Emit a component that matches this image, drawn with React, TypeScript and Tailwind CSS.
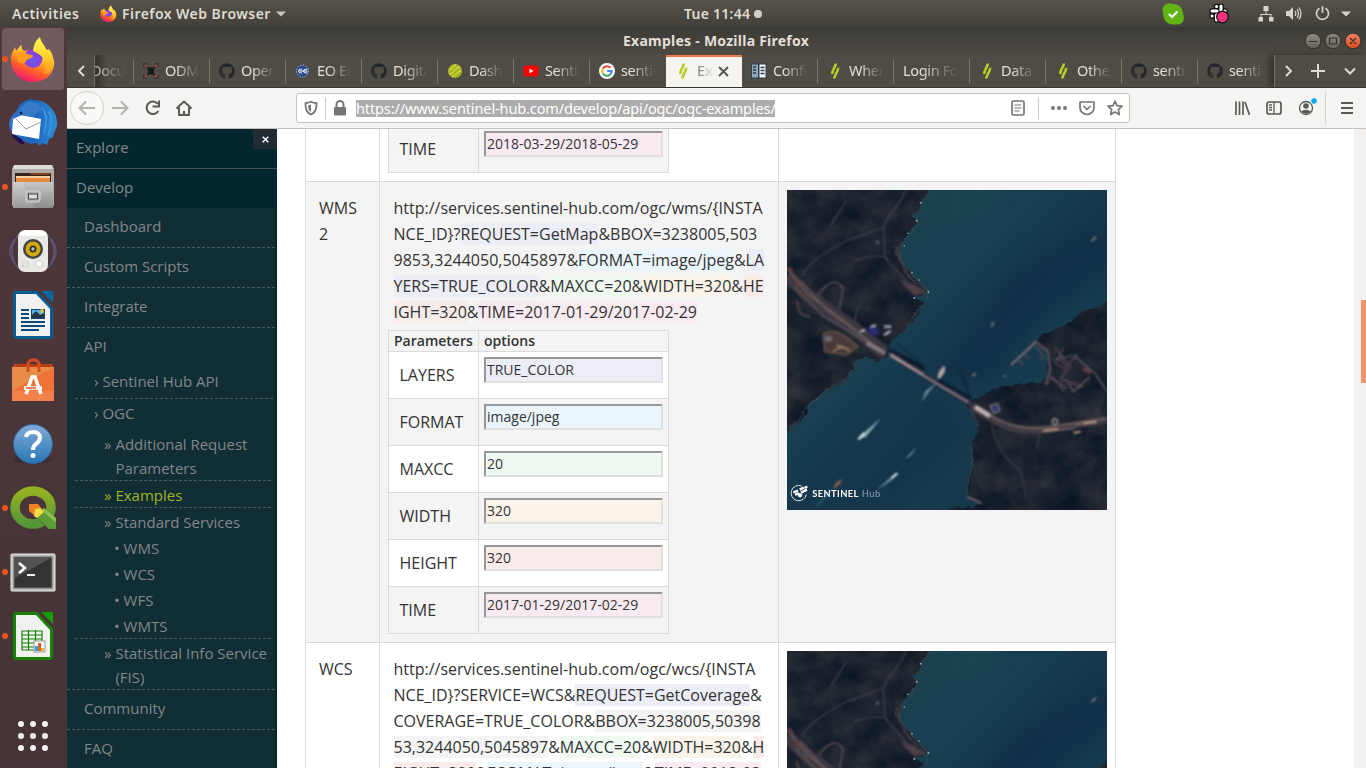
import React from "react";
import { FaGithub } from "react-icons/fa";

const UI = "font-['Noto_Sans','Open_Sans',sans-serif]";
const PAGE = "font-['Open_Sans','Noto_Sans',sans-serif]";

/* ---------- Icons ---------- */

function FirefoxLogo({ size, id }: { size: number; id: string }) {
  return (
    <svg width={size} height={size} viewBox="0 0 46 46">
      <defs>
        <linearGradient id={id + "a"} x1="0.75" y1="0.1" x2="0.3" y2="1">
          <stop offset="0" stopColor="#fff04a" />
          <stop offset="0.35" stopColor="#ffb020" />
          <stop offset="0.65" stopColor="#ff5a2c" />
          <stop offset="1" stopColor="#f0107a" />
        </linearGradient>
        <radialGradient id={id + "b"} cx="0.5" cy="0.6" r="0.6">
          <stop offset="0" stopColor="#6a5cf0" />
          <stop offset="1" stopColor="#9a35d8" />
        </radialGradient>
        <linearGradient id={id + "c"} x1="0.5" y1="0" x2="0.6" y2="1">
          <stop offset="0" stopColor="#fff650" />
          <stop offset="0.5" stopColor="#ffd52e" />
          <stop offset="1" stopColor="#ff9a20" />
        </linearGradient>
      </defs>
      <path d="M1 25C0 18 4 14 5 11l1 4c2-2 3-5 6-6-1 3 0 4 2 6 5 0 8-2 13-1 5-2 9 0 12 4 4 3 6 7 5 12C42 40 34 46 23 46S2 38 1 25z" fill={`url(#${id}a)`} />
      <circle cx="23" cy="22.500" r="9.500" fill={`url(#${id}b)`} />
      <path d="M23 15c1-7 3-11 7-14 1 6 5 8 6 12l2 1 1-1c4 5 6 12 4 18-2 5-6 7-10 7 3-3 4-8 2-12-2-6-6-8-12-11z" fill={`url(#${id}c)`} />
      <path d="M8 17c3-2 6-2 9 1 2 1 5 0 6 2-1 3-5 2-7 5-1 2-3 3-6 2-3-2-4-6-2-10z" fill="#ff9d1e" />
    </svg>
  );
}

const GithubMark = () => <FaGithub size={16} color="#24292e" />;

const SlashMark = () => (
  <svg width="16" height="16" viewBox="0 0 16 16" fill="none" stroke="#b5cc22" strokeWidth="2.600">
    <path d="M8.800.5C8.800 4 5.300 6 5.200 11M11.200 4.800C11.100 9.500 7.500 11 7.300 15.500" />
  </svg>
);

const OdmMark = () => (
  <svg width="16" height="16" viewBox="0 0 16 16" fill="none" stroke="#1d1b19" strokeWidth="1.100">
    <path d="M3 3l10 10M13 3L3 13" />
    <rect x="5.500" y="5" width="5" height="6" fill="#1d1b19" />
    <path d="M.7 4V.7H4M12 .7h3.300V4M.7 12v3.300H4M12 15.300h3.300V12" strokeDasharray="1.500 1" />
    <circle cx="3" cy="3" r="1.100" fill="#d9442c" stroke="none" /><circle cx="13" cy="3" r="1.100" fill="#d9442c" stroke="none" />
    <circle cx="3" cy="13" r="1.100" fill="#d9442c" stroke="none" /><circle cx="13" cy="13" r="1.100" fill="#d9442c" stroke="none" />
  </svg>
);

const EoMark = () => (
  <svg width="16" height="16" viewBox="0 0 16 16">
    <circle cx="7.500" cy="8" r="6.300" fill="#274a86" />
    <circle cx="7.500" cy="8" r="6" fill="none" stroke="#cfd8ea" strokeWidth="1" strokeDasharray="1.200 1.600" />
    <path d="M7 6.200H5.500a1.800 1.800 0 000 3.700H7M12.500 6.200H10.500a1.800 1.800 0 000 3.700h2M4.500 8h8" stroke="#fff" strokeWidth="1" fill="none" />
  </svg>
);

const DashMark = () => (
  <svg width="16" height="16" viewBox="0 0 16 16">
    <circle cx="8" cy="8" r="7" fill="#a9b81c" />
    <path d="M2 7c3 0 3-4 7-5M2 11c5 0 5-6 11-7M5 14c4-1 4-5 9-6" stroke="#dfe57a" strokeWidth="1" fill="none" />
  </svg>
);

const YoutubeMark = () => (
  <svg width="16" height="16" viewBox="0 0 16 16">
    <rect x=".5" y="2.500" width="15" height="11" rx="2.800" fill="#f00" />
    <path d="M6.500 5.700v4.600l4-2.300z" fill="#fff" />
  </svg>
);

const GoogleMark = () => (
  <svg width="16" height="16" viewBox="0 0 16 16">
    <circle cx="8" cy="8" r="8" fill="#fff" />
    <g fill="none" strokeWidth="2">
      <path d="M11.400 4.800A4.700 4.700 0 004 5.500" stroke="#ea4335" />
      <path d="M4 5.500a4.700 4.700 0 000 5" stroke="#fbbc05" />
      <path d="M4 10.500a4.700 4.700 0 007.200 1" stroke="#34a853" />
      <path d="M11.200 11.500A4.700 4.700 0 0012.700 8H8.200" stroke="#4285f4" />
    </g>
  </svg>
);

const DocsMark = () => (
  <svg width="16" height="16" viewBox="0 0 16 16">
    <rect x=".5" y="1" width="7" height="14" fill="#8fa5b8" stroke="#2c3e50" />
    <rect x="8" y="1" width="7" height="14" fill="#f4f4f4" stroke="#2c3e50" />
    <path d="M2 4h3M2 7h3M2 10h3M9.500 4.500h4M9.500 7.500h4M9.500 10.500h4" stroke="#2c3e50" strokeWidth="1.500" />
  </svg>
);

/* ---------- Top bars ---------- */

function SystemBar() {
  return (
    <header className={`flex h-[27px] shrink-0 items-center bg-linear-to-b from-[#57534a] to-[#42403a] text-[#dfdbd2] ${UI}`}>
      <div className="flex w-[660px] items-center pl-3 text-[14px] font-semibold">
        <span className="w-[88px] tracking-[0.5px]">Activities</span>
        <FirefoxLogo size={17} id="fxs" />
        <span className="ml-[5px] w-[150px] whitespace-nowrap tracking-[0.45px]">Firefox Web Browser</span>
        <svg className="ml-1" width="10" height="6" viewBox="0 0 10 6"><path d="M0 .5h10L5 5.500z" fill="#c9c5bd" /></svg>
      </div>
      <div className="flex items-center gap-1 pl-[24px] text-[14px] font-semibold">
        <span className="w-[66px] whitespace-nowrap tracking-[0.25px]">Tue 11:44</span>
        <span className="size-2 rounded-full bg-[#d3cfc8]" />
      </div>
      <div className="ml-auto flex items-center pr-[15px]">
        <svg className="mr-[24px]" width="22" height="22" viewBox="0 0 22 22">
          <path d="M6 .5c3-1 4 .4 7 .5 5 1 8 5 8 9 1 3 1 5 .5 7-1 4-5 5-8 4.500-4 .5-9-1-11-5C1 14 1.500 12 1 9-.5 5 2 1.500 6 .5z" fill="#5fb312" />
          <path d="M7 11l3 3 5.500-5.500" stroke="#fff" strokeWidth="2.200" fill="none" />
        </svg>
        <svg className="mr-[28px]" width="22" height="21" viewBox="0 0 22 21">
          <g stroke="#111" strokeWidth="5.500" strokeLinecap="round"><path d="M8.500 3.500h.1M4 8h5M13 3v5M17 8h.1M4 13h.1M8.500 12v5M13 12h4" /></g>
          <g stroke="#fff" strokeWidth="3" strokeLinecap="round"><path d="M8.500 3.500h.1M4 8h5M13 3v5M17 8h.1M4 13h.1M8.500 12v5M13 12h4" /></g>
          <circle cx="14.500" cy="14" r="5.800" fill="#f2327d" stroke="#111" strokeWidth="1.200" />
        </svg>
        <svg className="mr-[12px]" width="16" height="16" viewBox="0 0 16 16" fill="#d8d4cc">
          <path d="M5.500 0h5v5h-5zM.5 11h4.500v4.500H.5zM11 11h4.500v4.500H11zM7.500 5h1v3h5v3h-1V9h-9v2h-1V8h5z" />
        </svg>
        <svg className="mr-[13px]" width="16" height="15" viewBox="0 0 16 15">
          <path d="M0 5h3l4-4v13L3 10H0z" fill="#d8d4cc" />
          <path d="M9 5q1.600 2.500 0 5M11 3.200q3 4.300 0 8.600M13 1.500q4 6 0 12" stroke="#d8d4cc" strokeWidth="1.300" fill="none" />
        </svg>
        <svg className="mr-[11px]" width="15" height="15" viewBox="0 0 15 15" fill="none" stroke="#d8d4cc" strokeWidth="1.700">
          <path d="M4.500 2.200a6 6 0 106 0M7.500.3v6.500" />
        </svg>
        <svg width="10" height="6" viewBox="0 0 10 6"><path d="M0 .5h10L5 5.500z" fill="#d8d4cc" /></svg>
      </div>
    </header>
  );
}

const fade = "[mask-image:linear-gradient(to_right,#000_30%,transparent_98%)]";

function Tab({ icon, label, last }: { icon?: React.ReactNode; label: string; last?: boolean }) {
  return (
    <div className="flex h-8 w-[76px] shrink-0 items-center">
      <div className="flex w-[75px] items-center overflow-hidden pl-[9px]">
        {icon && <span className="mr-[6px] shrink-0">{icon}</span>}
        <span className={`flex-1 overflow-hidden whitespace-nowrap text-[14.500px] tracking-[-0.35px] text-[#e2dfd7] ${icon ? "max-w-[35px]" : "max-w-[56px]"} ${fade}`}>{label}</span>
      </div>
      {!last && <span className="h-6 w-px bg-[#7a766f]" />}
    </div>
  );
}

function WindowTitle() {
  return (
    <div className={`flex h-[28px] shrink-0 items-center bg-linear-to-b from-[#3b3a35] to-[#4e4b44] text-[#e3dfd7] ${UI}`}>
      <span className="mb-[2px] ml-[556px] w-[200px] whitespace-nowrap text-[14px] font-bold tracking-[0.25px]">Examples - Mozilla Firefox</span>
      <svg className="ml-auto mr-1" width="58" height="18" viewBox="0 0 58 18">
        <defs>
          <linearGradient id="wg" x2="0" y2="1"><stop offset="0" stopColor="#8d8a82" /><stop offset="1" stopColor="#65625b" /></linearGradient>
          <linearGradient id="wr" x2="0" y2="1"><stop offset="0" stopColor="#f58463" /><stop offset="1" stopColor="#dc4a1b" /></linearGradient>
        </defs>
        <circle cx="9" cy="9" r="7.800" fill="url(#wg)" stroke="#34322e" /><circle cx="29" cy="9" r="7.800" fill="url(#wg)" stroke="#34322e" /><circle cx="49" cy="9" r="7.800" fill="url(#wr)" stroke="#34322e" />
        <path d="M5 9.500h8M25.500 6h7v6h-7zM46 6l6 6M52 6l-6 6" stroke="#33312d" strokeWidth="1.200" fill="none" />
      </svg>
    </div>
  );
}

function TabStrip() {
  return (
    <div className={`flex h-[32px] shrink-0 bg-[#4f4c45] ${UI}`}>
      <div className="flex w-[28px] shrink-0 items-center justify-center border-r border-[#74716a]">
        <svg width="8" height="12" viewBox="0 0 8 12" fill="none" stroke="#dedad2" strokeWidth="2"><path d="M7 1L2 6l5 5" /></svg>
      </div>
      <div className="flex w-[39px] shrink-0 items-center justify-end overflow-hidden bg-linear-to-r from-[#34322e] to-[#4f4c45] to-30%">
        <span className="w-[38px] overflow-hidden whitespace-nowrap text-[14.500px] tracking-[-0.3px] text-[#b5b2ab] [mask-image:linear-gradient(to_right,#000_20%,transparent_80%)]"><span className="-ml-1">Docu</span></span>
        <span className="h-6 w-px shrink-0 bg-[#7a766f]" />
      </div>
      <Tab icon={<OdmMark />} label="ODM-" />
      <Tab icon={<GithubMark />} label="Open" />
      <Tab icon={<EoMark />} label="EO Edu" />
      <Tab icon={<GithubMark />} label="Digita" />
      <Tab icon={<DashMark />} label="Dashb" />
      <Tab icon={<YoutubeMark />} label="Sentin" />
      <Tab icon={<GoogleMark />} label="sentin" last />
      <div className="flex w-[76px] shrink-0 items-center border-t-2 border-[#f07746] bg-[#f5f4f2] pb-[2px] pl-[9px]">
        <SlashMark />
        <span className="ml-[6px] w-[18px] overflow-hidden whitespace-nowrap text-[14.500px] text-[#77756f] [mask-image:linear-gradient(to_right,#000,transparent_95%)]">Exa</span>
        <svg className="ml-[3px]" width="11" height="11" viewBox="0 0 11 11"><path d="M1 1l9 9M10 1l-9 9" stroke="#55534f" strokeWidth="1.800" /></svg>
      </div>
      <Tab icon={<DocsMark />} label="Config" />
      <Tab icon={<SlashMark />} label="Where" />
      <Tab label="Login For" />
      <Tab icon={<SlashMark />} label="Data f" />
      <Tab icon={<SlashMark />} label="Other" />
      <Tab icon={<GithubMark />} label="sentin" />
      <Tab icon={<GithubMark />} label="sentin" last />
      <div className="flex min-w-0 flex-1 items-center border-l border-[#74716a] bg-[#4f4c45] pl-[9px] shadow-[-4px_0_7px_#2f2e2a]">
        <svg className="shrink-0" width="76" height="16" viewBox="0 0 76 16" fill="none" stroke="#dedad2" strokeWidth="2">
          <path d="M2 3l5 5-5 5M27 8h14M34 1v14M61 5.500l5 5 5-5" />
        </svg>
      </div>
    </div>
  );
}

function Toolbar() {
  return (
    <div className={`flex h-[41px] shrink-0 items-center border-b border-[#c5c2bd] bg-[#f5f4f2] ${UI}`}>
      <svg width="229" height="40" viewBox="67 88 229 40" fill="none" stroke="#5a5956" strokeWidth="2">
        <circle cx="87" cy="108" r="16.500" fill="#f8f8f7" stroke="#d3d0cc" strokeWidth="1" />
        <path d="M95 108H80M86 101.500l-6.500 6.500 6.500 6.500" stroke="#b4b2af" />
        <path d="M112 108h15M121 101.500l6.500 6.500-6.500 6.500" stroke="#b4b2af" />
        <path d="M158 104a6.300 6.300 0 10.300 7M159 100.500v6h-6.500" />
        <path d="M176.500 108.500l7.500-7 7.500 7M179 107.500v7.500h10v-7.500M184 115v-4" strokeLinejoin="round" />
      </svg>
      <div className="flex h-[30px] w-[834px] shrink-0 items-center rounded-[3px] border border-[#c6c3be] bg-white">
        <svg className="shrink-0" width="59" height="28" viewBox="297 94 59 28" fill="none" stroke="#777674">
          <path d="M305.500 103q3 0 5.500-1.300 2.500 1.300 5.500 1.300c.3 5.500-1 9.500-5.500 11.500-4.500-2-5.800-6-5.500-11.500z" strokeWidth="1.800" />
          <path d="M311 104.500v7.500c-2.500-1.500-2.800-4-2.900-6.800 1 0 2-.2 2.900-.7z" fill="#777674" stroke="none" />
          <path d="M325.500 97.500v22" stroke="#d0ceca" />
          <rect x="334" y="107" width="12" height="8.500" rx="1" fill="#777674" stroke="none" />
          <path d="M336.500 107v-2.500a3.500 3.500 0 017 0v2.500" strokeWidth="2" />
        </svg>
        <span className="h-[17px] w-[419px] shrink-0 whitespace-nowrap bg-[#adadad] text-[14.500px] leading-[17px] tracking-[-0.12px] text-white">https://www.sentinel-hub.com/develop/api/ogc/ogc-examples/</span>
        <svg className="ml-auto" width="122" height="28" viewBox="1007 94 122 28" fill="none" stroke="#777674" strokeWidth="1.700">
          <rect x="1012" y="101" width="12" height="14" rx="1.500" />
          <path d="M1014.500 105h7M1014.500 108h7M1014.500 111h5" strokeWidth="1.200" />
          <path d="M1038.500 97.500v22" stroke="#d0ceca" strokeWidth="1" />
          <g fill="#777674" stroke="none"><circle cx="1053" cy="108" r="2" /><circle cx="1059" cy="108" r="2" /><circle cx="1065" cy="108" r="2" /></g>
          <path d="M1080 102h14v5.500a7 7 0 01-14 0zM1083.500 106l3.500 3.500 3.500-3.500" strokeLinejoin="round" />
          <path d="M1115 101.200l2 4.500 5 .5-3.700 3.400 1.100 5-4.400-2.600-4.400 2.600 1.100-5-3.700-3.400 5-.5z" strokeLinejoin="round" />
        </svg>
      </div>
      <svg className="ml-auto" width="136" height="40" viewBox="1230 88 136 40" fill="none" stroke="#5a5956" strokeWidth="2">
        <path d="M1236 101.500v13.500M1239.500 101.500v13.500M1243 101.500v13.500M1245 102l4.500 13" strokeWidth="1.700" />
        <rect x="1267" y="102" width="14" height="12" rx="2" strokeWidth="1.700" />
        <path d="M1274 102v12M1269 105h3M1269 107.500h3M1269 110h3" strokeWidth="1.300" />
        <circle cx="1306" cy="108" r="6.500" strokeWidth="1.300" />
        <circle cx="1306" cy="106" r="2.800" fill="#5a5956" stroke="none" /><path d="M1301 111.500q5-3.500 10 0-4.500 4.500-10 0z" fill="#5a5956" stroke="none" />
        <circle cx="1314" cy="101" r="3.300" fill="#00a8f5" stroke="#f5f4f2" strokeWidth="1" />
        <path d="M1325.500 91v34" stroke="#d5d3cf" strokeWidth="1" />
        <path d="M1341 103h12M1341 108h12M1341 113h12" />
      </svg>
    </div>
  );
}

/* ---------- Dock ---------- */

function DockItem({ children, active, running }: { children: React.ReactNode; active?: boolean; running?: boolean }) {
  return (
    <div className="flex h-[64.100px] shrink-0 items-center">
      <div className={`flex h-[62px] w-[62px] items-center rounded ${active ? "bg-[#715a5e]" : ""} ml-[2px]`}>
        <span className={`size-[6px] shrink-0 rounded-full ${running ? "bg-[#e95420]" : ""}`} />
        <div className="flex w-[50px] shrink-0 justify-center">{children}</div>
      </div>
    </div>
  );
}

function Dock() {
  return (
    <aside className="flex w-[67px] shrink-0 flex-col overflow-hidden bg-linear-to-b from-[#50373b] to-[#453437]">
      <DockItem active running><FirefoxLogo size={46} id="fxd" /></DockItem>
      <DockItem>
        <svg width="50" height="50" viewBox="0 0 50 50">
          <defs><linearGradient id="tb" x2="1"><stop offset="0" stopColor="#2f78cc" /><stop offset=".5" stopColor="#1d62bd" /><stop offset="1" stopColor="#2c8fd8" /></linearGradient></defs>
          <path d="M8 14Q12 5 17 3q5-3 10-1 9 0 15 7 8 7 7 19l-3 7-1 4-4 2-2 6-4-2-4 3-2-3-6 1Q1 38 1 26q1-8 7-12z" fill="url(#tb)" />
          <path d="M3 35l11 6 3 6Q6 44 3 35z" fill="#211155" />
          <path d="M5 21l9-4 19 4-2 20L4 36z" fill="#fff" /><path d="M8 21l10 10 15-7" stroke="#999" fill="none" />
          <path d="M10 16q4-10 11-13 11 1 13 8L24 19l-13-2z" fill="#367bc5" /><path d="M34 10q7 7 2 25M41 13q5 9-1 24" stroke="#4a9ddf" strokeWidth="2" fill="none" opacity=".7" /><circle cx="13" cy="15" r="1.500" fill="#101c38" />
        </svg>
      </DockItem>
      <DockItem running>
        <svg width="44" height="46" viewBox="0 0 44 46">
          <defs><linearGradient id="dr" x2="0" y2="1"><stop offset="0" stopColor="#c7c7c7" /><stop offset="1" stopColor="#8d8d8d" /></linearGradient></defs>
          <path d="M3 1h38l2 4v36l-2 3H3l-2-3V5z" fill="#adaba8" /><path d="M3 1h38l1 4H2z" fill="#dedcd9" />
          <path d="M4 9h36v10H4z" fill="#35231c" /><path d="M5 12h34v7H5z" fill="#e7893e" /><path d="M5 13h34" stroke="#f7d09f" strokeWidth="2" /><path d="M19 10h20" stroke="#d15b1e" />
          <path d="M2 18h40v26H2z" fill="url(#dr)" /><path d="M2 18h9l13 26H2z" fill="#fff" opacity=".12" />
          <rect x="15" y="27" width="14" height="11" rx="2" fill="#b0b0b0" stroke="#d6d6d6" /><rect x="17.500" y="30" width="9" height="5" fill="#ddd" stroke="#444" />
        </svg>
      </DockItem>
      <DockItem>
        <svg width="50" height="46" viewBox="0 0 50 46">
          <path d="M7 11q-10 13 0 25M43 11q10 13 0 25M10 7Q-2 24 10 40M40 7q12 17 0 33" stroke="#5e6892" strokeWidth="1.300" fill="none" opacity=".75" />
          <rect x="10" y="2" width="30" height="42" rx="7" fill="#e8e8e5" /><path d="M16 2.500h18q4 1 5 5H11q1-4 5-5z" fill="#fff" />
          <circle cx="25" cy="21" r="10" fill="#444" /><circle cx="25" cy="21" r="7.500" fill="#d2aa0a" /><circle cx="25" cy="21" r="3.500" fill="#333" /><circle cx="25" cy="21" r="1.700" fill="#bbb" />
          <circle cx="31" cy="36" r="3.500" fill="#fafafa" stroke="#ccc" /><rect x="15" y="34" width="5" height="5" fill="none" stroke="#d2d2cf" />
        </svg>
      </DockItem>
      <DockItem>
        <svg width="40" height="48" viewBox="0 0 40 48">
          <path d="M2 0h22l16 17v29l-2 2H2l-2-2V2z" fill="#075d93" /><path d="M28 0h12v12z" fill="#0668a1" />
          <path d="M3 3h20l14 15v27H3z" fill="#f1f1ef" /><path d="M23 3l14 15v-1L23 3z" fill="#999" />
          <path d="M8 19h8M8 23h8M8 27h8M8 31h24M8 35h24M8 39h18" stroke="#064b79" strokeWidth="2" /><rect x="18.500" y="18.500" width="13" height="9" fill="#58aee3" stroke="#064b79" /><path d="M19 27v-3l4-4 4 4 4-2v5z" fill="#283642" /><circle cx="29" cy="20" r="2" fill="#e2bd34" />
        </svg>
      </DockItem>
      <DockItem>
        <svg width="42" height="44" viewBox="0 0 42 44">
          <path d="M2 6h38v6H2z" fill="#b43d11" /><path d="M0 10l4-4M42 10l-4-4" stroke="#da592a" />
          <path d="M0 9h42v34H0z" fill="#ef7336" /><path d="M0 9h42L0 33z" fill="#e39a54" opacity=".65" /><path d="M0 33h42v10H0z" fill="#f28249" />
          <path d="M16 14V5l3-3h5l3 3v9" stroke="#d9491d" strokeWidth="3" fill="none" />
          <path d="M14 36l6-17h3l6 17M12 30h18" stroke="#fff" strokeWidth="3.500" fill="none" /><path d="M14 30h10" stroke="#e45b28" strokeWidth="1.500" />
        </svg>
      </DockItem>
      <DockItem>
        <svg width="42" height="44" viewBox="0 0 42 44">
          <defs><linearGradient id="hp" x2="0" y2="1"><stop offset="0" stopColor="#84aad8" /><stop offset="1" stopColor="#2777b5" /></linearGradient></defs>
          <ellipse cx="21" cy="37" rx="20" ry="5" fill="#30292d" opacity=".5" /><circle cx="21" cy="22" r="19.500" fill="url(#hp)" stroke="#2b669d" />
          <path d="M14 15q1-5 7-5t7 5q0 4-4 7-3 2-3 6" stroke="#fff" strokeWidth="4" fill="none" /><circle cx="21" cy="33.500" r="2.500" fill="#fff" />
        </svg>
      </DockItem>
      <DockItem running>
        <svg width="46" height="46" viewBox="0 0 46 46">
          <defs><linearGradient id="qg" x2="0" y2="1"><stop offset="0" stopColor="#93b222" /><stop offset="1" stopColor="#559638" /></linearGradient></defs>
          <ellipse cx="23" cy="22.500" rx="18" ry="16.500" fill="none" stroke="url(#qg)" strokeWidth="9.500" />
          <path d="M23 29l15 15h8v-9L29 25z" fill="#4a3538" /><path d="M25 31l14 13h7v-6L31 25z" fill="#589d36" /><path d="M31 25l15 13v-5L34 23z" fill="#8bc24b" />
          <path d="M19 19h9l4 5-7 7-6-5z" fill="#f38024" /><path d="M25 24l5-1 4 4-7 6-3-2z" fill="#f5dc45" />
        </svg>
      </DockItem>
      <DockItem running>
        <svg className="translate-y-px" width="46" height="40" viewBox="0 0 46 40">
          <rect x="1" y="1" width="44" height="37" rx="1" fill="#b9b9b6" stroke="#ededeb" /><rect x="4" y="4" width="38" height="31" fill="#333" stroke="#777" />
          <path d="M5 5h36L5 25z" fill="#686868" opacity=".6" /><path d="M9 10l6 5-6 5" stroke="#fff" strokeWidth="2.500" fill="none" /><path d="M17 22h8" stroke="#eee" strokeWidth="2" />
        </svg>
      </DockItem>
      <DockItem running>
        <svg width="40" height="48" viewBox="0 0 40 48">
          <path d="M2 0h22l16 17v29l-2 2H2l-2-2V2z" fill="#168207" /><path d="M28 0h12v12z" fill="#189b0a" />
          <path d="M3 3h20l14 15v27H3z" fill="#f1f1ef" />
          <path d="M9 19h20v19H9zM9 23h20M9 27h20M9 31h20M9 35h20M15.500 18v20M22.500 18v20" stroke="#187e0a" strokeWidth="1.200" fill="none" />
          <rect x="21" y="29" width="11" height="11" fill="#f7f7f7" stroke="#999" /><path d="M22 34h3v5h-3z" fill="#35a0df" /><path d="M25 31h3v8h-3z" fill="#d8661c" /><path d="M28 36h3v3h-3z" fill="#e6b420" />
        </svg>
      </DockItem>
      <svg className="ml-[17px] mt-auto mb-[16px] shrink-0" width="32" height="32" viewBox="0 0 32 32" fill="#f2efef">
        {[4, 16, 28].map((y) => [4, 16, 28].map((x) => <circle key={`${x}-${y}`} cx={x} cy={y} r="3" />))}
      </svg>
    </aside>
  );
}

/* ---------- Site navigation ---------- */

function SideNav() {
  const dash = "border-b border-dashed border-[#4f5c5c]";
  return (
    <nav className={`w-[210px] shrink-0 overflow-hidden bg-[#03272e] text-[15px] text-[#82878a] ${PAGE}`}>
      <div className="flex h-[40px] items-start justify-between border-b border-[#4b5055]">
        <span className="pl-[9px] leading-[37px]">Explore</span>
        <span className="flex h-5 w-6 items-center justify-center bg-[#232c34]">
          <svg width="7" height="7" viewBox="0 0 7 7"><path d="M.7.7l5.600 5.600M6.300.7L.7 6.300" stroke="#fff" strokeWidth="1.500" /></svg>
        </span>
      </div>
      <div className="h-[39px] pl-[9px] leading-[37px]">Develop</div>
      <div className="mr-[2px] bg-[#112e35]">
        {["Dashboard", "Custom Scripts", "Integrate"].map((t) => (
          <div key={t} className={`h-[40px] pl-[17px] leading-[36px] ${dash}`}>{t}</div>
        ))}
        <div className="h-[37px] pl-[17px] leading-[36px]">API</div>
        <div className={`ml-2 mr-[2px] h-[34px] pl-[19px] leading-[32px] ${dash}`}>› Sentinel Hub API</div>
        <div className="h-[32px] pl-[27px] leading-[28px]">› OGC</div>
        <div className={`ml-2 mr-1 flex h-[50px] gap-1 pl-[29px] leading-[24px] ${dash}`}><span className="pt-px">»</span><span className="pt-px">Additional Request<br />Parameters</span></div>
        <div className={`ml-2 mr-1 flex h-[27px] gap-1 pl-[29px] leading-[28px] text-[#a3b320] ${dash}`}><span>»</span><span>Examples</span></div>
        <div className="flex h-[28px] gap-1 pl-[37px] leading-[28px]"><span>»</span><span>Standard Services</span></div>
        {["WMS", "WCS", "WFS"].map((t) => <div key={t} className="h-[26px] pl-[47px] leading-[24px]">• {t}</div>)}
        <div className={`ml-2 mr-1 h-[25px] pl-[39px] leading-[24px] ${dash}`}>• WMTS</div>
        <div className={`flex h-[51px] gap-1 pl-[37px] pt-[2px] leading-[24px] ${dash}`}><span>»</span><span className="whitespace-nowrap">Statistical Info Service<br />(FIS)</span></div>
        <div className={`h-[40px] pl-[17px] leading-[37px] ${dash}`}>Community</div>
        <div className="h-[40px] pl-[17px] leading-[37px]">FAQ</div>
      </div>
    </nav>
  );
}

/* ---------- Satellite view ---------- */

const WEST = "M16 10H470L440 65 438 90 412 98 428 130 400 155 378 195 372 235 400 265 430 300 460 335 418 355 445 370 425 415 385 455 345 485 335 530 310 545 270 528 235 550 225 590 195 615 150 635 110 665 90 705 55 740 16 795z";
const EAST = "M1020 355L915 398 880 430 845 450 800 465 780 485 815 520 820 550 812 600 725 612 650 628 600 655 575 680 610 735 600 770 595 800 592 870 575 955 620 975 530 985 500 1010H1020z";

function SatelliteView({ id }: { id: string }) {
  return (
    <svg width="320" height="320" viewBox="36 30 960 960" className="block">
      <defs>
        <linearGradient id={id + "w"} x1="0" y1="0" x2="1" y2="1">
          <stop offset="0" stopColor="#1b444f" /><stop offset=".38" stopColor="#183f50" /><stop offset=".52" stopColor="#16364b" /><stop offset=".62" stopColor="#173c4f" /><stop offset="1" stopColor="#163247" />
        </linearGradient>
        <filter id={id + "n"} x="0" y="0" width="100%" height="100%" colorInterpolationFilters="sRGB">
          <feTurbulence type="fractalNoise" baseFrequency=".012 .015" numOctaves="5" seed="8" result="n" />
          <feColorMatrix in="n" values="0 0 0 .19 .015  0 0 0 .15 .062  0 0 0 .09 .135  0 0 0 0 1" />
          <feComposite in2="SourceGraphic" operator="in" />
        </filter>
        <filter id={id + "b"} colorInterpolationFilters="sRGB"><feGaussianBlur stdDeviation="2.600" /></filter>
        <filter id={id + "g"} x="-20%" y="-20%" width="140%" height="140%" colorInterpolationFilters="sRGB"><feGaussianBlur stdDeviation="28" /></filter>
        <filter id={id + "e"} colorInterpolationFilters="sRGB"><feTurbulence type="fractalNoise" baseFrequency=".035" numOctaves="3" seed="3" /><feDisplacementMap in="SourceGraphic" scale="22" xChannelSelector="R" yChannelSelector="A" /></filter>
        <clipPath id={id + "c"}><path d="M36 30h960v960H36z" /></clipPath>
      </defs>
      <g clipPath={`url(#${id}c)`}>
        <path d="M36 30h960v960H36z" fill={`url(#${id}w)`} />
        <g filter={`url(#${id}g)`}>
          <path d="M1020 110L700 300 560 520 500 590 640 620 790 430 1020 270z" fill="#102b46" opacity=".6" />
          <path d="M520 90l90-60h70L590 85z" fill="#23555b" opacity=".5" />
          <path d="M480 640l110 60v80l-240 210H180z" fill="#142f49" opacity=".55" />
        </g>
        <g filter={`url(#${id}e)`}>
          <g filter={`url(#${id}n)`}><path d={WEST} /><path d={EAST} /></g>
          <path d="M460 30L440 65 438 90 412 98 428 130 378 195 372 235 430 300 460 335 445 370 385 455" stroke="#47464e" strokeWidth="4" fill="none" opacity=".6" />
          <path d="M270 528l-35 22-10 40-75 45-60 50-54 80" stroke="#4b5052" strokeWidth="4" fill="none" opacity=".5" />
          <path d="M365 200l10 40 45 75" stroke="#4a3f45" strokeWidth="10" fill="none" opacity=".6" />
          <path d="M850 530l30 30-20 40 60 20M830 590l40 40" stroke="#4f4048" strokeWidth="14" fill="none" opacity=".6" />
          <path d="M590 790v80l-15 80" stroke="#3d444c" strokeWidth="4" fill="none" opacity=".6" />
        </g>
        <g fill="none" filter={`url(#${id}b)`} strokeLinejoin="round">
          <path d="M80 290c20-45 80-80 140-110l105-38 15-30c20-30 50-60 52-82M325 142l5 90 70 80 55 24M215 60l-50 80M240 240q90-25 100 0M250 375l-12 55" stroke="#42424d" strokeWidth="4" />
          <path d="M36 285l60 60 120 85 115 90" stroke="#3d3841" strokeWidth="40" />
          <path d="M36 265l60 75 120 90 115 95" stroke="#665650" strokeWidth="6" />
          <path d="M75 300l80 90 170 125M60 320l85 90 130 75" stroke="#655a5f" strokeWidth="4" />
          <path d="M130 345q45-65 75-20l-12 60M65 360l10 40 30 12" stroke="#554649" strokeWidth="6" />
          <path d="M145 465q20-20 60 0l45 35-40 25-60-10z" fill="#463a3b" stroke="#665246" strokeWidth="5" />
          <path d="M175 515q30-25 50 0M185 495l25 8" stroke="#a98a6c" strokeWidth="4" />
          <path d="M380 305l40 12 28 20-30 8z" fill="#503f47" stroke="#473d46" strokeWidth="5" />
          <path d="M275 488l55 32" stroke="#847880" strokeWidth="12" />
          <path d="M345 512l95 48 0 10" stroke="#0e182e" strokeWidth="13" />
          <path d="M345 522l240 148 60 35" stroke="#342f3f" strokeWidth="15" />
          <path d="M345 527l235 140M345 521l100 62" stroke="#a79699" strokeWidth="4.500" />
          <path d="M490 600l100 55" stroke="#0c1d31" strokeWidth="9" />
          <path d="M555 565l30 85M562 590l18 50M335 485l8 35M365 490l65 50" stroke="#0e2337" strokeWidth="4" />
          <path d="M590 680l60 35c65 45 120 35 170 32l176-28" stroke="#423b45" strokeWidth="22" />
          <path d="M600 680l60 35c65 30 120 32 150 28l186-28M800 755l100-10M900 735l65-8" stroke="#7d6c6a" strokeWidth="4" />
          <path d="M805 752l45-5M895 758l22-3M925 730l40-4" stroke="#c09a80" strokeWidth="6" />
          <path d="M600 680l45 28" stroke="#bdb0b0" strokeWidth="14" />
          <path d="M650 730q15 90 85 140l20 80M795 755l-10 55M590 690l20 50" stroke="#3f404b" strokeWidth="4" />
          <path d="M708 555l75-70 35 30 8 50-12 50" stroke="#5b5057" strokeWidth="7" />
          <path d="M708 555l75-70" stroke="#857a7d" strokeWidth="4" />
          <path d="M730 537l15 20M748 520l12 17M785 500l20 30-10 10M830 540l75-15-35 40-30-15 25-45M825 590l35 30M840 500l30 40" stroke="#514650" strokeWidth="5" />
          <path d="M900 530l60 50 36 55M885 615l10 20 50-45" stroke="#676069" strokeWidth="4" />
          <path d="M925 565l22 14" stroke="#603b40" strokeWidth="12" />
          <path d="M575 950l45 20" stroke="#817c80" strokeWidth="5" />
        </g>
        <g filter={`url(#${id}b)`}>
          <path d="M275 445l25-10 15 25-25 10z" fill="#2a2c72" /><path d="M255 455l16-5M327 440l22 0M327 465l20-12M287 440l16-4" stroke="#b6afbb" strokeWidth="7" />
          <path d="M645 678l22-8 8 22-18 8z" fill="#34366c" stroke="#7a727e" strokeWidth="4" />
          <path d="M150 468h22v16h-22z" fill="#6b6872" /><path d="M301 181h12v12h-12z" fill="#4c4c57" /><path d="M42 262l10 14M70 303l-4 14" stroke="#6b3b3a" strokeWidth="8" />
          <circle cx="840" cy="725" r="8" fill="none" stroke="#a09294" strokeWidth="4" />
          <path d="M488 595q0-25 20-38 10 15-15 40z" fill="#b5a3a6" /><path d="M485 607l-45 58 10-30z" fill="#6d8792" />
          <path d="M250 779l25-28 42-35-45 55z" fill="#8fabb5" /><path d="M390 838l25-28 10-8-18 25zM305 930l42-38 20-14-18 24z" fill="#668994" />
          <path d="M250 778l18-20M350 894l17-14" stroke="#eff8f9" strokeWidth="6" />
          <path d="M175 926q5-23 27-28-5 20-27 28z" fill="#855f50" /><path d="M170 930l-45 50" stroke="#2f5866" strokeWidth="6" />
          <path d="M650 440l6-14M950 183l13-13M592 588l10-8M685 588h8" stroke="#8a8088" strokeWidth="5" />
        </g>
        <g fill="#96a8ad">
          <circle cx="437" cy="68" r="3" /><circle cx="425" cy="122" r="3" /><circle cx="398" cy="160" r="2.500" /><circle cx="388" cy="198" r="2.500" /><circle cx="411" cy="278" r="2.500" /><circle cx="432" cy="300" r="2.500" /><circle cx="460" cy="335" r="3" /><circle cx="418" cy="354" r="3" />
        </g>
        <g fill="none" stroke="#fff">
          <path d="M80 918a23 23 0 1014 25" strokeWidth="2.500" />
          <path d="M55 937l14-5M60 944l12-4" strokeWidth="7" /><path d="M74 929l12-6M88 924l9-4M78 938l18-9" strokeWidth="7" /><circle cx="75" cy="946" r="6" fill="#fff" />
        </g>
        <text x="112" y="950" fill="#fff" fontFamily="Lato" fontWeight="700" fontSize="28" textLength="138" lengthAdjust="spacing">SENTINEL</text>
        <text x="260" y="950" fill="#8ca3ad" fontFamily="Lato" fontSize="28" textLength="56" lengthAdjust="spacing">Hub</text>
      </g>
    </svg>
  );
}

/* ---------- Page table ---------- */

const tints: Record<string, string> = {
  lav: "bg-[#ededf7]", blue: "bg-[#ebf5fc]", green: "bg-[#eff9f2]", tan: "bg-[#f9f3ea]", red: "bg-[#f8ebe9]", pink: "bg-[#f8eaf1]", grey: "bg-[#f4f4f4]", none: "",
};
type Run = [string, string?];

function UrlLines({ lines }: { lines: Run[][] }) {
  return (
    <div className="pl-[5.500px]">
      {lines.map((line, i) => (
        <div key={i} className="h-[26px] whitespace-nowrap text-[16px] leading-[26px]">
          {line.map(([t, c], j) => <span key={j} className={tints[c ?? "none"]}>{t}</span>)}
        </div>
      ))}
    </div>
  );
}

function ParamRow({ name, value, tint, shaded }: { name: string; value: string; tint: string; shaded?: boolean }) {
  return (
    <div className={`flex h-[47px] border-b border-[#dadada] ${shaded ? "bg-[#f4f4f4]" : "bg-white"}`}>
      <div className="w-[90px] border-r border-[#dadada] pl-[10.500px] text-[16px] leading-[46px]">{name}</div>
      <div className="pl-[5px] pt-[5px]">
        <div className={`h-[26px] w-[179px] border-2 border-b-[#e0e0e0] border-l-[#979797] border-r-[#e0e0e0] border-t-[#979797] pl-px text-[14px] leading-[22px] ${tints[tint]}`}>{value}</div>
      </div>
    </div>
  );
}

const wmsLines: Run[][] = [
  [["http://services.sentinel-hub.com/ogc/wms/{INSTA"]],
  [["NCE_ID}?"], ["REQUEST=GetMap", "lav"], ["&"], ["BBOX=3238005,503", "grey"]],
  [["9853,3244050,5045897", "grey"], ["&"], ["FORMAT=image/jpeg", "blue"], ["&"], ["LA", "lav"]],
  [["YERS=TRUE_COLOR", "lav"], ["&"], ["MAXCC=20", "green"], ["&"], ["WIDTH=320", "tan"], ["&"], ["HE", "red"]],
  [["IGHT=320", "red"], ["&"], ["TIME=2017-01-29/2017-02-29", "pink"]],
];
const wcsLines: Run[][] = [
  [["http://services.sentinel-hub.com/ogc/wcs/{INSTA"]],
  [["NCE_ID}?SERVICE=WCS&"], ["REQUEST=GetCoverage", "lav"], ["&"]],
  [["COVERAGE=TRUE_COLOR&"], ["BBOX=3238005,50398", "grey"]],
  [["53,3244050,5045897", "grey"], ["&"], ["MAXCC=20", "green"], ["&"], ["WIDTH=320", "tan"], ["&"], ["H", "red"]],
  [["EIGHT=320", "red"], ["&"], ["FORMAT=image/jpeg", "blue"], ["&"], ["TIME=2018-03", "pink"]],
];

function Row({ label, shaded, height, children, picture }: { label: React.ReactNode; shaded?: boolean; height: string; children: React.ReactNode; picture?: React.ReactNode }) {
  return (
    <div className={`flex shrink-0 overflow-hidden border-b border-[#dadada] ${height} ${shaded ? "bg-[#f4f4f4]" : "bg-white"}`}>
      <div className="w-[74px] shrink-0 border-r border-[#dadada] pl-[13px] pt-[13px] text-[16px] leading-[26px]">{label}</div>
      <div className="w-[399px] shrink-0 border-r border-[#dadada] pl-[8px]">{children}</div>
      <div className="pl-[8px] pt-[8px]">{picture}</div>
    </div>
  );
}

function Content() {
  return (
    <main className={`flex flex-1 overflow-hidden bg-white text-[#333] ${PAGE}`}>
      <div className="ml-[28px] flex h-[640px] w-[811px] flex-col overflow-hidden border-x border-[#dadada]">
        <Row label="" height="h-[53px]">
          <div className="-mt-[3px] w-[281px] border-x border-[#dadada]"><ParamRow name="TIME" value="2018-03-29/2018-05-29" tint="pink" shaded /></div>
        </Row>
        <Row label={<>WMS<br />2</>} height="h-[461px]" shaded picture={<SatelliteView id="s1" />}>
          <div className="pt-[13px]"><UrlLines lines={wmsLines} /></div>
          <div className="mt-[5px] w-[281px] border-x border-t border-[#dadada]">
            <div className="flex h-[21px] border-b border-[#dadada] bg-[#f4f4f4] text-[14px] font-semibold leading-[20px]">
              <div className="w-[90px] border-r border-[#dadada] pl-[5px]">Parameters</div>
              <div className="pl-[5px]">options</div>
            </div>
            <ParamRow name="LAYERS" value="TRUE_COLOR" tint="lav" />
            <ParamRow name="FORMAT" value="image/jpeg" tint="blue" shaded />
            <ParamRow name="MAXCC" value="20" tint="green" />
            <ParamRow name="WIDTH" value="320" tint="tan" shaded />
            <ParamRow name="HEIGHT" value="320" tint="red" />
            <ParamRow name="TIME" value="2017-01-29/2017-02-29" tint="pink" shaded />
          </div>
        </Row>
        <Row label="WCS" height="h-[461px]" picture={<SatelliteView id="s2" />}>
          <div className="pt-[13px]"><UrlLines lines={wcsLines} /></div>
        </Row>
      </div>
      <div className="ml-auto flex w-[12px] justify-end bg-[#f2f1f0]">
        <div className="mt-[171px] h-[83px] w-[5px] bg-[#f1926a]" />
      </div>
    </main>
  );
}

export default function App() {
  return (
    <div className="flex h-[768px] w-[1366px] flex-col overflow-hidden">
      <SystemBar />
      <div className="flex min-h-0 flex-1">
        <Dock />
        <div className="flex min-w-0 flex-1 flex-col">
          <WindowTitle />
          <TabStrip />
          <div className="h-px shrink-0 bg-[#37352f]" />
          <Toolbar />
          <div className="flex min-h-0 flex-1"><SideNav /><Content /></div>
        </div>
      </div>
    </div>
  );
}
